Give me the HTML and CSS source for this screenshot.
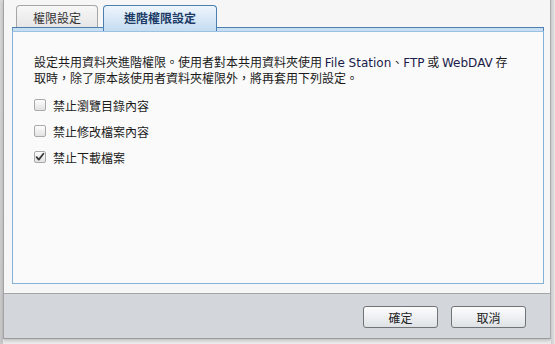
FILE: index.html
```html
<!DOCTYPE html>
<html lang="zh-Hant">
<head>
<meta charset="utf-8">
<link rel="stylesheet" href="styles.css">
</head>
<body>
<div class="backdrop-left"></div>
<div class="window">
  <div class="main">
    <div class="tabs">
      <div class="tab">權限設定</div>
      <div class="tab tab-active">進階權限設定</div>
    </div>
    <div class="panel">
      <div class="strip"></div>
      <div class="panel-body">
        <p class="desc">設定共用資料夾進階權限。使用者對本共用資料夾使用 <span class="lat">File Station</span>、<span class="lat">FTP</span> 或 <span class="lat">WebDAV</span> 存取時，除了原本該使用者資料夾權限外，將再套用下列設定。</p>
        <div class="options">
          <label class="opt"><span class="cb"></span><span>禁止瀏覽目錄內容</span></label>
          <label class="opt"><span class="cb"></span><span>禁止修改檔案內容</span></label>
          <label class="opt"><span class="cb cb-on"><svg viewBox="0 0 12 12" width="12" height="12"><path d="M2.6 6.2 L4.8 8.6 L9.4 2.8" fill="none" stroke="#3a3a3a" stroke-width="1.8" stroke-linecap="round" stroke-linejoin="round"/></svg></span><span>禁止下載檔案</span></label>
        </div>
      </div>
    </div>
  </div>
  <div class="footer">
    <button class="btn">確定</button>
    <button class="btn">取消</button>
  </div>
</div>
<div class="backdrop-right"></div>
</body>
</html>
```

FILE: styles.css
```css
html, body {
  margin: 0;
  padding: 0;
}
body {
  width: 555px;
  height: 344px;
  display: flex;
  overflow: hidden;
  background: #ededed;
  font-family: "Noto Sans CJK TC", sans-serif;
  font-size: 12px;
  color: #1a1a1a;
}
.backdrop-left {
  width: 3px;
  height: 344px;
  background: linear-gradient(#d6d6d6, #c8c8c8);
}
.backdrop-right {
  flex: 1;
  background: linear-gradient(to right, #c9c9c9, #e6e6e6);
}
.window {
  width: 546px;
  height: 338px;
  display: flex;
  flex-direction: column;
  background: #f6f6f6;
  border-left: 1px solid #a3a3a3;
  border-right: 1px solid #a9a9a9;
  border-bottom: 1px solid #9c9c9c;
  box-shadow: 0 2px 3px rgba(0,0,0,0.18);
}
.main {
  flex: 1;
  padding: 5px 6px 9px 8px;
  display: flex;
  flex-direction: column;
}
.tabs {
  display: flex;
  gap: 5px;
  padding-left: 4px;
  height: 22px;
  position: relative;
  z-index: 1;
}
.tab {
  width: 82px;
  height: 22px;
  box-sizing: border-box;
  border: 1px solid #a6a6a6;
  border-bottom: none;
  border-radius: 4px 4px 0 0;
  background: linear-gradient(#f7f7f7, #e6e6e6);
  color: #333;
  display: flex;
  align-items: center;
  justify-content: center;
  padding-top: 1px;
}
.tab-active {
  width: 114px;
  height: 26px;
  border: 1px solid #4a7fb0;
  border-bottom: none;
  background: linear-gradient(#eef5fc, #c5dcf1);
  color: #1b3b66;
  font-weight: bold;
  padding-bottom: 4px;
}
.panel {
  flex: 1;
  display: flex;
  flex-direction: column;
}
.strip {
  height: 3px;
  border-top: 1px solid #4a7fb0;
  border-left: 1px solid #6b9bc8;
  border-right: 1px solid #4f86ba;
  background: #c8def2;
}
.panel-body {
  flex: 1;
  background: #fafafa;
  border: 1px solid #85b1d9;
  border-top: 1px solid #9cc2e3;
  padding: 22px 20px 0 21px;
}
.desc {
  margin: 0;
  width: 482px;
  line-height: 16px;
}
.lat {
  font-family: "DejaVu Sans", sans-serif;
  font-size: 12px;
  line-height: 14px;
  color: #1c1c4a;
}
.options {
  margin-top: 6px;
  display: flex;
  flex-direction: column;
}
.opt {
  height: 26px;
  display: flex;
  align-items: center;
  gap: 7px;
}
.cb {
  width: 12px;
  height: 12px;
  box-sizing: border-box;
  border: 1px solid #a9a9a9;
  border-radius: 2px;
  background: linear-gradient(#fdfdfd, #e2e2e2);
  display: flex;
}
.cb svg {
  margin: -1px;
}
.footer {
  height: 45px;
  box-sizing: border-box;
  border-top: 1px solid #a5a5a5;
  background: #d3d7db;
  display: flex;
  justify-content: flex-end;
  align-items: flex-start;
  gap: 13px;
  padding: 12px 24px 0 0;
}
.btn {
  width: 75px;
  height: 22px;
  border: 1px solid #707478;
  border-radius: 3px;
  background: linear-gradient(#fcfcfc, #eef0f2 50%, #dfe2e5);
  font-family: "Noto Sans CJK TC", sans-serif;
  font-size: 12px;
  color: #222;
  padding: 0;
}
```
